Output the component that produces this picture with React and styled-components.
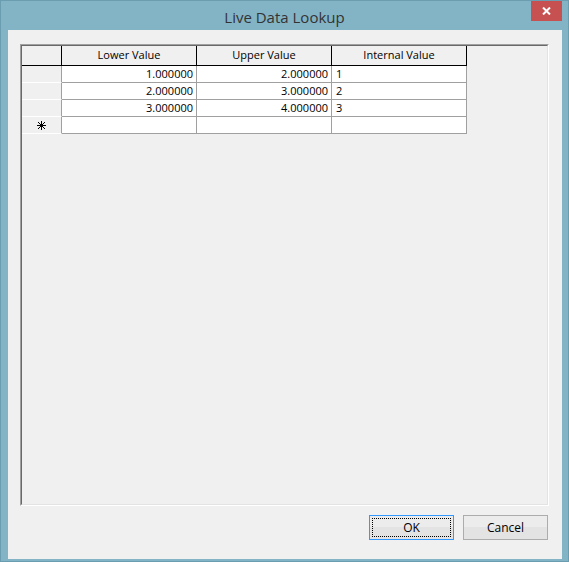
import React from "react";
import styled, { createGlobalStyle } from "styled-components";

const Global = createGlobalStyle`
  html, body { margin: 0; padding: 0; width: 569px; height: 562px; overflow: hidden; background: #83b4c6; }
  * { box-sizing: border-box; }
`;

const Window = styled.div`
  width: 569px;
  height: 562px;
  background: #83b4c6;
  border: 1px solid #6b9db0;
  display: flex;
  flex-direction: column;
  font-family: "Segoe UI", "Open Sans", "Noto Sans", sans-serif;
`;

const TitleBar = styled.div`
  height: 29px;
  flex: none;
  display: grid;
  grid-template-columns: 1fr auto 1fr;
  align-items: start;
`;

const Title = styled.div`
  grid-column: 2;
  font-size: 15px;
  line-height: 18px;
  padding-top: 7px;
  color: #333;
  font-family: "Open Sans", "Noto Sans", sans-serif;
`;

const CloseButton = styled.div`
  grid-column: 3;
  justify-self: end;
  margin-right: 6px;
  width: 31px;
  height: 20px;
  background: #c75050;
  display: flex;
  align-items: center;
  justify-content: center;
`;

const Client = styled.div`
  flex: 1;
  margin: 0 6px 2px 7px;
  background: #f0f0f0;
  padding: 14px 13px 19px 12px;
  display: flex;
  flex-direction: column;
`;

const GridBox = styled.div`
  flex: 1;
  border-style: solid;
  border-width: 1px;
  border-color: #a0a0a0 #ffffff #ffffff #a0a0a0;
  display: flex;
`;

const GridInner = styled.div`
  flex: 1;
  border-style: solid;
  border-width: 1px;
  border-color: #696969 #e3e3e3 #e3e3e3 #696969;
  background: #f0f0f0;
  display: flex;
  align-items: flex-start;
`;

const Table = styled.div`
  display: grid;
  grid-template-columns: 40px 135px 135px 135px;
  grid-template-rows: 20px repeat(4, 17px);
  font-family: "Open Sans", "Noto Sans", sans-serif;
  font-size: 11px;
  color: #000;
`;

const HeadCell = styled.div`
  border-right: 1px solid #000;
  border-bottom: 1px solid #000;
  background: #f0f0f0;
  display: flex;
  align-items: center;
  justify-content: center;
  line-height: 14px;
  padding-bottom: 1px;
`;

const RowHead = styled.div`
  border-right: 1px solid #a0a0a0;
  border-bottom: 1px solid #ffffff;
  background: #f0f0f0;
  display: flex;
  align-items: center;
  justify-content: center;
`;

const Cell = styled.div`
  border-right: 1px solid #a0a0a0;
  border-bottom: 1px solid #a0a0a0;
  background: #fff;
  display: flex;
  align-items: center;
  justify-content: ${(p) => (p.$right ? "flex-end" : "flex-start")};
  padding: 0 3px 0 4px;
  line-height: 14px;
`;

const ButtonRow = styled.div`
  display: flex;
  justify-content: flex-end;
  gap: 9px;
  margin-top: 9px;
  margin-right: 1px;
`;

const Button = styled.div`
  width: 85px;
  height: 25px;
  border: 1px solid ${(p) => (p.$default ? "#3399ff" : "#acacac")};
  background: linear-gradient(#ececec 0%, #ececec 50%, #e3e3e3 50%, #e3e3e3 100%);
  display: flex;
  align-items: center;
  justify-content: center;
  position: relative;
  font-family: "Open Sans", "Noto Sans", sans-serif;
  font-size: 12px;
  color: #000;
  padding-bottom: 1px;
`;

const FocusRect = styled.div`
  position: absolute;
  inset: 2px;
  border: 1px dotted #000;
`;

const rows = [
  ["1.000000", "2.000000", "1"],
  ["2.000000", "3.000000", "2"],
  ["3.000000", "4.000000", "3"],
];

function NewRowIcon() {
  return (
    <svg width="9" height="9" viewBox="0 0 9 9">
      <g stroke="#000" strokeWidth="1" strokeLinecap="butt">
        <line x1="4.5" y1="0" x2="4.5" y2="9" />
        <line x1="0" y1="4.5" x2="9" y2="4.5" />
        <line x1="1" y1="1" x2="8" y2="8" />
        <line x1="8" y1="1" x2="1" y2="8" />
      </g>
      <rect x="3.5" y="3.5" width="2" height="2" fill="#000" />
    </svg>
  );
}

export default function App() {
  return (
    <>
      <Global />
      <Window>
        <TitleBar>
          <Title>Live Data Lookup</Title>
          <CloseButton>
            <svg width="9" height="8" viewBox="0 0 9 8">
              <path d="M1 0.5 L8 7.5 M8 0.5 L1 7.5" stroke="#fff" strokeWidth="2" />
            </svg>
          </CloseButton>
        </TitleBar>
        <Client>
          <GridBox>
            <GridInner>
              <Table>
                <HeadCell />
                <HeadCell>Lower Value</HeadCell>
                <HeadCell>Upper Value</HeadCell>
                <HeadCell>Internal Value</HeadCell>
                {rows.map((r, i) => (
                  <React.Fragment key={i}>
                    <RowHead />
                    <Cell $right>{r[0]}</Cell>
                    <Cell $right>{r[1]}</Cell>
                    <Cell>{r[2]}</Cell>
                  </React.Fragment>
                ))}
                <RowHead>
                  <NewRowIcon />
                </RowHead>
                <Cell />
                <Cell />
                <Cell />
              </Table>
            </GridInner>
          </GridBox>
          <ButtonRow>
            <Button $default>
              <FocusRect />
              OK
            </Button>
            <Button>Cancel</Button>
          </ButtonRow>
        </Client>
      </Window>
    </>
  );
}
